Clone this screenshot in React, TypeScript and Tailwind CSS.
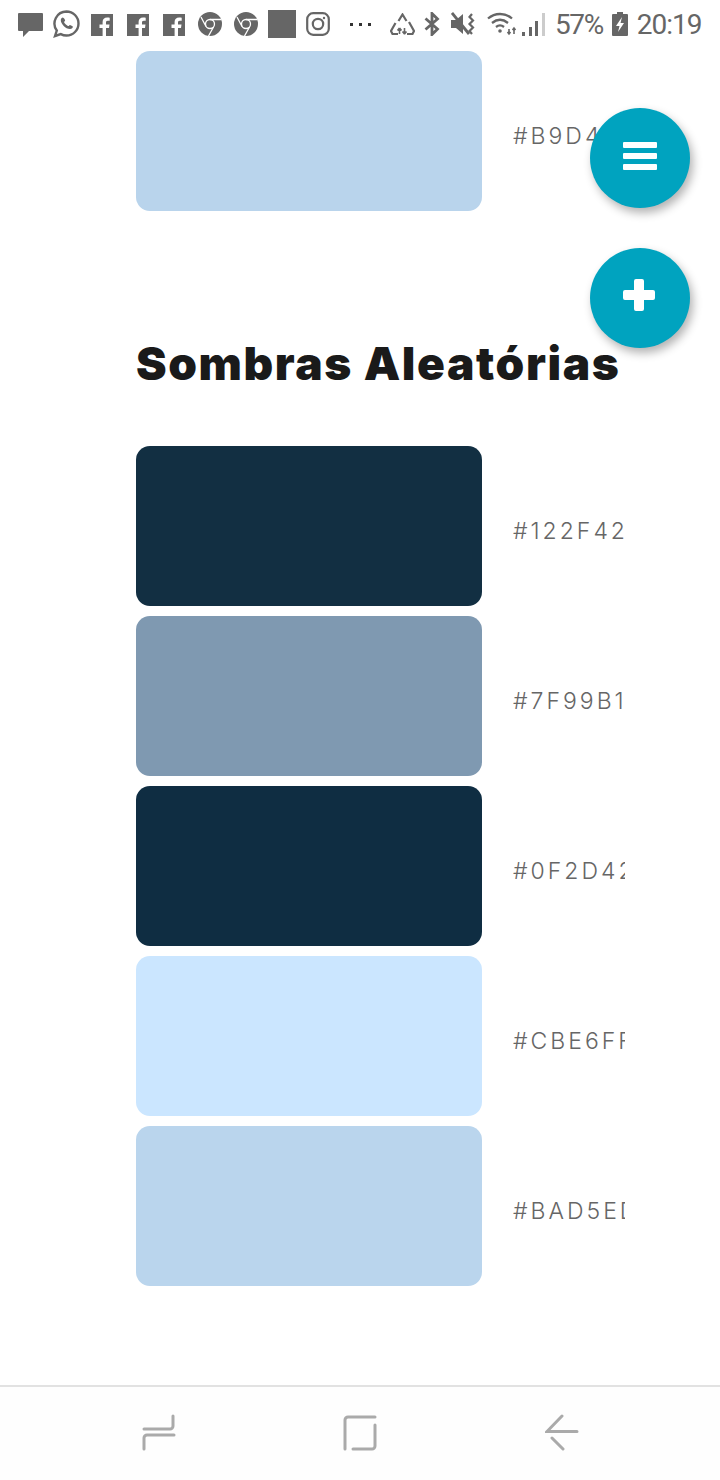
const SWATCHES = [
  { color: "bg-[#122f42]", label: "#122F42" },
  { color: "bg-[#7f99b1]", label: "#7F99B1" },
  { color: "bg-[#0f2d42]", label: "#0F2D42" },
  { color: "bg-[#cbe6ff]", label: "#CBE6FF" },
  { color: "bg-[#bad5ed]", label: "#BAD5ED" },
];

function FbIcon({ className }: { className: string }) {
  return (
    <svg width="22" height="22" viewBox="0 0 22 22" className={className}>
      <path fill="#666" d="M0 0h22v22h-7v-8h3l.5-3.500H15V8.500c0-1 .4-1.700 1.800-1.700h1.900V3.700c-.5-.1-1.500-.2-2.600-.2-2.700 0-4.500 1.600-4.500 4.500v2.500H8.500V14h3.100v8H0z" />
    </svg>
  );
}

function ChromeIcon({ className }: { className: string }) {
  return (
    <svg width="24" height="24" viewBox="0 0 24 24" className={className}>
      <circle cx="12" cy="12" r="12" fill="#666" />
      <circle cx="12" cy="12" r="4.500" fill="none" stroke="#fff" strokeWidth="1.300" />
      <path stroke="#fff" strokeWidth="1.300" fill="none" d="M12 7.500h11M8 14.500 3 5M15.500 15 10.500 24" />
    </svg>
  );
}

function StatusBar() {
  return (
    <div className="h-[51px] flex items-start shrink-0 pl-[18px] font-['Roboto',sans-serif] text-[#666]">
      <svg width="25" height="25" viewBox="0 0 25 25" className="mt-[13px]">
        <path fill="#666" d="M1 0h23a1 1 0 0 1 1 1v16a1 1 0 0 1-1 1H11l-6 6v-6H1a1 1 0 0 1-1-1V1a1 1 0 0 1 1-1z" />
      </svg>
      <svg width="27" height="28" viewBox="0 0 27 28" className="mt-[10px] ml-[10px]" fill="none">
        <path stroke="#666" strokeWidth="2.400" d="M13.500 1.500a12 12 0 0 1 0 24c-2 0-4-.5-5.700-1.400L2 26l1.800-5.500A12 12 0 0 1 13.500 1.500z" />
        <path fill="#666" d="M9.800 7.500c-.8 0-2 1-2 2.800 0 3.500 4.800 8.800 9.200 8.800 1.800 0 2.900-1.300 2.900-2.300 0-.7-2.500-1.900-3-1.900-.5 0-1 1.200-1.500 1.200-1 0-4.300-2.700-4.300-4 0-.6 1-1 1-1.600 0-.5-1.200-3-2.300-3z" />
      </svg>
      <FbIcon className="mt-[14px] ml-[11px]" />
      <FbIcon className="mt-[14px] ml-[14px]" />
      <FbIcon className="mt-[14px] ml-[14px]" />
      <ChromeIcon className="mt-[12px] ml-[13px]" />
      <ChromeIcon className="mt-[12px] ml-[12px]" />
      <div className="w-[28px] h-[28px] bg-[#666] mt-[10px] ml-[10px]" />
      <svg width="24" height="24" viewBox="0 0 24 24" className="mt-[12px] ml-[10px]" fill="none" stroke="#666" strokeWidth="2.200">
        <rect x="1.200" y="1.200" width="21.600" height="21.600" rx="6" />
        <circle cx="12" cy="12" r="5.200" />
        <circle cx="18" cy="6" r="1.200" fill="#666" stroke="none" />
      </svg>
      <div className="flex gap-[6px] mt-[23px] ml-[20px]">
        <div className="w-[3px] h-[3px] bg-[#333]" />
        <div className="w-[3px] h-[3px] bg-[#333]" />
        <div className="w-[3px] h-[3px] bg-[#333]" />
      </div>
      <svg width="25" height="23" viewBox="0 0 25 23" className="mt-[13px] ml-[19px]" fill="none" stroke="#666" strokeWidth="2.200">
        <path d="M8.500 8 12.500 1.500 16.500 8M19 9l5 9-1.500 3H17M8 21H2.500L1 18l4.500-8" />
        <path d="M9.500 21v-6M9.500 15l-2 2.500M9.500 15l2 2.500M14.500 15v6M14.500 21l-2-2.500M14.500 21l2-2.500" strokeWidth="1.600" />
      </svg>
      <svg width="16" height="24" viewBox="0 0 16 24" className="mt-[12px] ml-[9px]" fill="none" stroke="#666" strokeWidth="2.800">
        <path d="M1.500 6.500 13.500 17 8 22.500V1.500L13.500 7 1.500 17.500" />
      </svg>
      <svg width="26" height="24" viewBox="0 0 26 24" className="mt-[12px] ml-[11px]">
        <path fill="#666" d="M0 8h5l7-6v20l-7-6H0z" />
        <path stroke="#666" strokeWidth="2.800" d="M1 1l17 21" />
        <path stroke="#666" strokeWidth="2.200" fill="none" d="M21 2l-2.500 3 3.500 3.500-3.500 3.500 3.500 3.500-3.500 3.500 2.500 3" />
      </svg>
      <svg width="33" height="24" viewBox="0 0 33 24" className="mt-[12px] ml-[10px]" fill="none" stroke="#666" strokeWidth="2.300">
        <path d="M1 6.500C8 .5 18 .5 25 6.500M5 11c5-4 11-4 16 0M9 15c2.500-2 5.500-2 8 0" />
        <circle cx="13" cy="19" r="1.800" fill="#666" stroke="none" />
        <path d="M22 17v5M27 22v-6M25.500 18l1.500-2 1.500 2M20.500 20l1.500 2 1.500-2" strokeWidth="1.600" />
      </svg>
      <svg width="25" height="24" viewBox="0 0 25 24" className="mt-[12px] ml-[2px]">
        <rect x="0" y="20" width="3" height="4" fill="#666" />
        <rect x="7" y="15" width="3" height="9" fill="#666" />
        <rect x="13" y="9" width="3" height="15" fill="#666" />
        <rect x="20" y="1" width="3" height="23" fill="#ccc" />
      </svg>
      <span className="text-[28px] leading-[28px] tracking-[-1.400px] mt-[11px] ml-[8px]">57%</span>
      <svg width="16" height="24" viewBox="0 0 16 24" className="mt-[12px] ml-[9px]">
        <path fill="#666" d="M5 0h6v2h4a1 1 0 0 1 1 1v20a1 1 0 0 1-1 1H1a1 1 0 0 1-1-1V3a1 1 0 0 1 1-1h4z" />
        <path fill="#fff" d="M10 5 4 14h3.500L6 20l6-9H8.500z" />
      </svg>
      <span className="text-[28px] leading-[28px] tracking-[-1px] mt-[11px] ml-[9px]">20:19</span>
    </div>
  );
}

function SwatchRow({ color, label }: { color: string; label: string }) {
  return (
    <div className="flex items-center">
      <div className={`w-[346px] h-[160px] rounded-[14px] shrink-0 ${color}`} />
      <div className="ml-[31px] w-[112px] overflow-hidden whitespace-nowrap text-[23px] leading-[28px] tracking-[3px] font-light text-[#666] font-['Inter',sans-serif] mt-[10px]">
        {label}
      </div>
    </div>
  );
}

function Fab({ children }: { children: React.ReactNode }) {
  return (
    <div className="w-[100px] h-[100px] rounded-full bg-[#00a3bf] flex items-center justify-center shadow-[3px_5px_10px_rgba(0,0,0,0.3)]">
      {children}
    </div>
  );
}

export default function App() {
  return (
    <div className="relative w-[720px] h-[1480px] overflow-hidden bg-white flex flex-col">
      <StatusBar />

      <div className="flex-1 pl-[136px]">
        <SwatchRow color="bg-[#b9d4ec]" label="#B9D4EC" />
        <h1 className="mt-[127px] mb-[58px] text-[46px] leading-[50px] font-black tracking-[1.600px] text-[#1a1a1a] whitespace-nowrap font-['Inter',sans-serif]">
          Sombras Aleatórias
        </h1>
        <div className="flex flex-col gap-[10px]">
          {SWATCHES.map((s) => (
            <SwatchRow key={s.label} color={s.color} label={s.label} />
          ))}
        </div>
      </div>

      {/* botões flutuantes */}
      <div className="absolute left-[590px] top-[108px] flex flex-col gap-[40px]">
        <Fab>
          <svg width="34" height="28" viewBox="0 0 34 28" className="-mt-[4px]" fill="#fff">
            <rect width="34" height="6" rx="1" />
            <rect y="11" width="34" height="6" rx="1" />
            <rect y="22" width="34" height="6" rx="1" />
          </svg>
        </Fab>
        <Fab>
          <svg width="32" height="32" viewBox="0 0 32 32" className="-mt-[6px] -ml-[2px]" fill="#fff">
            <path d="M13 0h6a2 2 0 0 1 2 2v9h9a2 2 0 0 1 2 2v6a2 2 0 0 1-2 2h-9v9a2 2 0 0 1-2 2h-6a2 2 0 0 1-2-2v-9H2a2 2 0 0 1-2-2v-6a2 2 0 0 1 2-2h9V2a2 2 0 0 1 2-2z" />
          </svg>
        </Fab>
      </div>

      {/* barra de navegação */}
      <div className="h-[95px] shrink-0 border-t-2 border-[#e2e2e2] bg-[#fefefe] relative flex items-start">
        <svg width="34" height="38" viewBox="0 0 34 38" className="ml-[142px] mt-[27px]" fill="none" stroke="#aaa" strokeWidth="3" strokeLinecap="round">
          <path d="M31 2v10a3 3 0 0 1-3 3H2M32 21H5a3 3 0 0 0-3 3v11" />
        </svg>
        <svg width="34" height="36" viewBox="0 0 34 36" className="ml-[167px] mt-[28px]" fill="none" stroke="#aaa" strokeWidth="3" strokeLinecap="round">
          <path d="M2 34V5a3 3 0 0 1 3-3h27M32 10v21a3 3 0 0 1-3 3H10" />
        </svg>
        <svg width="34" height="38" viewBox="0 0 34 38" className="ml-[168px] mt-[27px]" fill="none" stroke="#aaa" strokeWidth="3" strokeLinecap="round">
          <path d="M17 2 2 17.500H32M7 24l11 11" />
        </svg>
      </div>
    </div>
  );
}
